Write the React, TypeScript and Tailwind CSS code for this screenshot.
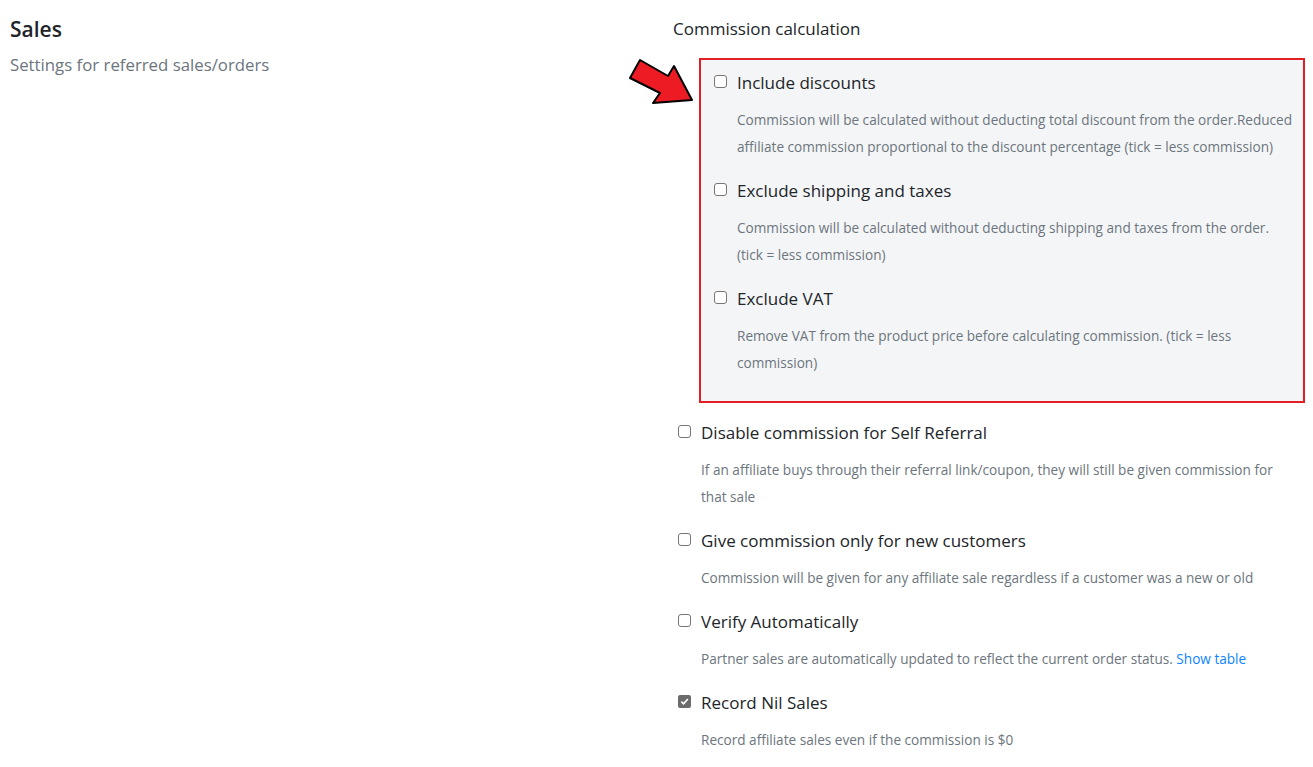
import React from "react";

interface SettingItem {
  label: string;
  description: string;
  checked?: boolean;
  link?: string;
}

const boxedItems: SettingItem[] = [
  {
    label: "Include discounts",
    description:
      "Commission will be calculated without deducting total discount from the order.Reduced affiliate commission proportional to the discount percentage (tick = less commission)",
  },
  {
    label: "Exclude shipping and taxes",
    description:
      "Commission will be calculated without deducting shipping and taxes from the order. (tick = less commission)",
  },
  {
    label: "Exclude VAT",
    description:
      "Remove VAT from the product price before calculating commission. (tick = less commission)",
  },
];

const otherItems: SettingItem[] = [
  {
    label: "Disable commission for Self Referral",
    description:
      "If an affiliate buys through their referral link/coupon, they will still be given commission for that sale",
  },
  {
    label: "Give commission only for new customers",
    description:
      "Commission will be given for any affiliate sale regardless if a customer was a new or old",
  },
  {
    label: "Verify Automatically",
    description:
      "Partner sales are automatically updated to reflect the current order status.",
    link: "Show table",
  },
  {
    label: "Record Nil Sales",
    description: "Record affiliate sales even if the commission is $0",
    checked: true,
  },
];

const Checkbox: React.FC<{ checked?: boolean }> = ({ checked }) =>
  checked ? (
    <span className="flex h-[13px] w-[13px] shrink-0 items-center justify-center rounded-[2px] bg-[#6b6b6b]">
      <svg width="9" height="9" viewBox="0 0 9 9">
        <path
          d="M1.3 4.6 L3.6 6.8 L7.8 2"
          fill="none"
          stroke="white"
          strokeWidth="1.7"
        />
      </svg>
    </span>
  ) : (
    <span className="h-[13px] w-[13px] shrink-0 rounded-[3px] border border-[#767676] bg-white" />
  );

const Setting: React.FC<{ item: SettingItem }> = ({ item }) => (
  <div className="pb-[18px]">
    <div className="flex h-[26px] items-center pl-[5px]">
      <span className="-mt-[3px] flex">
        <Checkbox checked={item.checked} />
      </span>
      <span className="ml-[10px] text-[17px] leading-[26px] text-[#212529]">
        {item.label}
      </span>
    </div>
    <p className="mt-[10px] pl-[28px] text-[13.6px] leading-[27px] text-[#6c757d]">
      {item.description}
      {item.link && (
        <>
          {" "}
          <span className="text-[#0d84ff]">{item.link}</span>
        </>
      )}
    </p>
  </div>
);

export default function App() {
  return (
    <div
      className="flex min-h-[767px] bg-white"
      style={{ fontFamily: "'Open Sans', 'Noto Sans', sans-serif" }}
    >
      <div className="w-[673px] shrink-0 pl-[10px] pt-[16px]">
        <h2 className="text-[21px] font-semibold leading-[26px] text-[#212529]">
          Sales
        </h2>
        <p className="mt-[10px] text-[16.8px] leading-[26px] text-[#6c757d]">
          Settings for referred sales/orders
        </p>
      </div>
      <div className="relative flex-1 pr-[8px] pt-[16px]">
        <h3 className="text-[17px] leading-[26px] text-[#212529]">
          Commission calculation
        </h3>
        <svg
          className="absolute left-[-48px] top-[55px]"
          width="72"
          height="52"
          viewBox="625 55 72 52"
        >
          <polygon
            points="640,60 668,76 674,66 692,100 653,103 660,93 630,78"
            fill="#ed1c24"
            stroke="black"
            strokeWidth="2"
            strokeLinejoin="round"
          />
        </svg>
        <div className="ml-[26px] mt-[16px] mb-[17px] border-2 border-[#e31e24] bg-[#f4f5f7] pb-[7px] pl-[8px] pr-[8px] pt-[10px]">
          {boxedItems.map((item) => (
            <Setting key={item.label} item={item} />
          ))}
        </div>
        <div className="pr-[16px]">
          {otherItems.map((item) => (
            <Setting key={item.label} item={item} />
          ))}
        </div>
      </div>
    </div>
  );
}
